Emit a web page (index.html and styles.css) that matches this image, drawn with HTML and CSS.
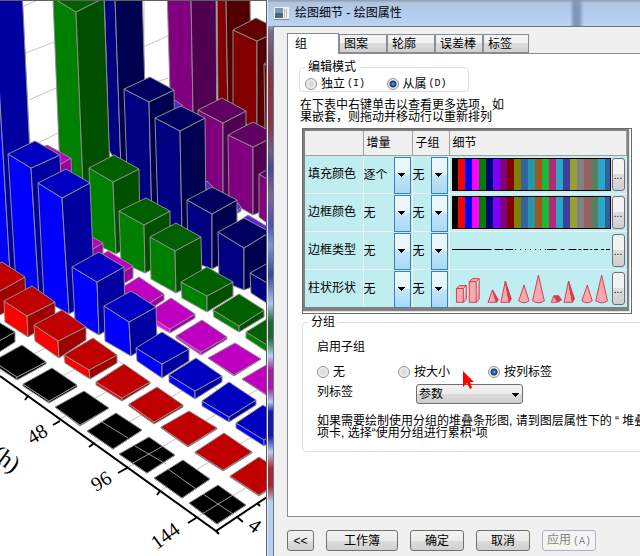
FILE: index.html
```html
<!DOCTYPE html>
<html lang="zh-CN">
<head>
<meta charset="utf-8">
<title>绘图细节 - 绘图属性</title>
<link rel="stylesheet" href="styles.css">
</head>
<body>
<main class="workspace">
  <section class="graph">
    <svg class="plot" viewBox="0 0 267 556" role="img" aria-label="3D 柱状图">
      <g class="gridlines">
        <path d="M22 0 30 145M24 6 38 0M26 53 54 42M29 100 56 88M32 146 60 132M143 47 168 36M145 86 168 78M144 0V90"/>
        <path d="M0 372 60 340M25 397 95 358M57 421 130 378M92 444 190 386M127 468 260 388M160 491 267 428M196 518 267 475M90 340 150 384M120 320 267 425"/>
      </g>
      <g id="bars" class="bars"></g>
      <path class="cross" d="M102 422 128 438M135 446 166 464M133 463 163 446M168 469 196 489M203 494 233 514M202 514 233 495"/>
      <path class="axis" d="M0 376 216 531 267 497M28 396 25 400M60 421 53 425M93 444 89 447M127 468 118 473M160 491 157 495M196 518 188 523M216 531 219 534M237 517 243 522M257 503 260 506"/>
      <g class="ticks">
        <text transform="translate(32 445) rotate(-31)">48</text>
        <text transform="translate(96 492) rotate(-31)">96</text>
        <text transform="translate(157 550) rotate(-36)">144</text>
        <text transform="translate(247 528) rotate(36)">4</text>
        <text class="unit" transform="translate(-10 457) rotate(36)">(h)</text>
      </g>
      <path class="rim" d="M0 .5H267M266.500 0V556"/>
    </svg>
  </section>

  <section class="dialog" aria-label="绘图细节">
    <header class="titlebar">
      <svg class="app-icon" viewBox="0 0 15 13" aria-hidden="true">
        <rect width="15" height="13" rx="1" fill="#f3f3f0"/><rect x="1" y="1" width="8" height="10" fill="#7d99b0"/><rect x="1" y="6" width="8" height="5" fill="#456a78"/><path d="M10.500 2V11M12.500 2V11" stroke="#bbb"/><path d="M0 12.500H15" stroke="#888"/>
      </svg>
      <h1>绘图细节 - 绘图属性</h1>
    </header>
    <div class="client">
      <nav class="tabs" role="tablist">
        <button class="tab active" role="tab" aria-selected="true">组</button>
        <button class="tab" role="tab">图案</button>
        <button class="tab" role="tab">轮廓</button>
        <button class="tab" role="tab">误差棒</button>
        <button class="tab" role="tab">标签</button>
      </nav>
      <div class="page" role="tabpanel">
        <fieldset class="box mode">
          <legend>编辑模式</legend>
          <label><input type="radio" name="mode">独立<span class="key">(I)</span></label>
          <label><input type="radio" name="mode" checked>从属<span class="key">(D)</span></label>
        </fieldset>
        <p class="note">在下表中右键单击以查看更多选项，如<br>果嵌套，则拖动并移动行以重新排列</p>
        <div class="table-frame">
          <table class="props">
            <colgroup><col class="c-name"><col class="c-inc"><col class="c-sub"><col></colgroup>
            <thead><tr><th></th><th>增量</th><th>子组</th><th>细节</th></tr></thead>
            <tbody>
              <tr>
                <th>填充颜色</th>
                <td><span class="combo"><select aria-label="填充颜色 增量"><option>逐个</option></select></span></td>
                <td><span class="combo"><select aria-label="填充颜色 子组"><option>无</option></select></span></td>
                <td><div class="detail"><span class="swatches"></span><button class="more" aria-label="填充颜色 细节">...</button></div></td>
              </tr>
              <tr>
                <th>边框颜色</th>
                <td><span class="combo"><select aria-label="边框颜色 增量"><option>无</option></select></span></td>
                <td><span class="combo"><select aria-label="边框颜色 子组"><option>无</option></select></span></td>
                <td><div class="detail"><span class="swatches"></span><button class="more" aria-label="边框颜色 细节">...</button></div></td>
              </tr>
              <tr>
                <th>边框类型</th>
                <td><span class="combo"><select aria-label="边框类型 增量"><option>无</option></select></span></td>
                <td><span class="combo"><select aria-label="边框类型 子组"><option>无</option></select></span></td>
                <td><div class="detail">
                  <svg class="sample" viewBox="0 0 161 33" aria-hidden="true"><path class="line" d="M0 15.500H40M43 15.500H52M54 15.500H62M64 15.500h1M69 15.500h1M74 15.500h1M79 15.500h1M84 15.500h1M89 15.500h1M94 15.500h1M96 15.500H106M110 15.500h4M118 15.500h8M128 15.500h3M133 15.500h5M140 15.500h2M144 15.500h4M151 15.500h3M156 15.500h4"/></svg>
                  <button class="more" aria-label="边框类型 细节">...</button></div></td>
              </tr>
              <tr>
                <th>柱状形状</th>
                <td><span class="combo"><select aria-label="柱状形状 增量"><option>无</option></select></span></td>
                <td><span class="combo"><select aria-label="柱状形状 子组"><option>无</option></select></span></td>
                <td><div class="detail">
                  <svg class="sample shapes" viewBox="0 0 161 33" aria-hidden="true">
                    <path d="M4.500 16.500H11.500V30.500H4.500ZM4.500 16.500 7.500 13.500H14.500L11.500 16.500M14.500 13.500V27.500L11.500 30.500"/>
                    <path d="M17.500 9.500H24.500V30.500H17.500ZM17.500 9.500 20.500 6.500H27.500L24.500 9.500M27.500 6.500V27.500L24.500 30.500"/>
                    <path d="M36.500 30.500 41 18 45 30.500Z"/><path class="shade" d="M41 18 47 28 45 30.500Z"/>
                    <path d="M49.500 30.500 54 9 58 30.500Z"/><path class="shade" d="M54 9 60 27 58 30.500Z"/>
                    <path d="M67.500 29 73 13 78 29Q73 33 67.500 29Z"/><path d="M81.500 29 87.500 3 93.500 29Q88 33 81.500 29Z"/>
                    <path d="M100.500 30.500 103 24H108L106 30.500Z"/><path class="shade" d="M103 24H108L111 28 107 30.500Z"/>
                    <path d="M113.500 30.500 118 9 122 30.500Z"/><path class="shade" d="M118 9 124 27 122 30.500Z"/>
                    <path d="M131.500 29 137 13 142 29Q137 33 131.500 29Z"/><path d="M145.500 29 151.500 3 157.500 29Q152 33 145.500 29Z"/>
                  </svg>
                  <button class="more" aria-label="柱状形状 细节">...</button></div></td>
              </tr>
            </tbody>
          </table>
        </div>
        <fieldset class="box grouping">
          <legend>分组</legend>
          <p class="caption">启用子组</p>
          <div class="choices">
            <label><input type="radio" name="sub">无</label>
            <label><input type="radio" name="sub">按大小</label>
            <label><input type="radio" name="sub" checked>按列标签</label>
          </div>
          <div class="field">
            <label for="col-label">列标签</label>
            <select id="col-label" class="dropdown"><option>参数</option></select>
          </div>
          <p class="hint">如果需要绘制使用分组的堆叠条形图, 请到图层属性下的 “ 堆叠<br>项卡, 选择“使用分组进行累积“项</p>
        </fieldset>
      </div>
      <footer class="actions">
        <button class="btn fold">&lt;&lt;</button>
        <button class="btn wide">工作簿</button>
        <button class="btn">确定</button>
        <button class="btn">取消</button>
        <button class="btn" disabled>应用<span class="key">(A)</span></button>
      </footer>
    </div>
    <svg class="pointer" viewBox="0 0 12 18" aria-hidden="true"><path d="M0 0V16L4 12 7 18 9 17 7 11H11Z" fill="#f00"/></svg>
  </section>
</main>
<script src="chart.js"></script>
</body>
</html>
```
FILE: styles.css
```css
* { box-sizing: border-box; }

body {
  margin: 0;
  overflow: hidden;
  background: #fff;
  color: #000;
  font: 12px/12px "Liberation Sans", "Noto Sans CJK SC", sans-serif;
}

button, select, input { font: inherit; color: inherit; margin: 0; }
h1, p { margin: 0; font-weight: normal; }

.workspace {
  display: grid;
  grid-template-columns: 267px minmax(0, 1fr);
  min-height: 100vh;
}

/* 3D bar graph */
.graph { overflow: hidden; }
.plot { display: block; width: 100%; }
.gridlines { fill: none; stroke: #c4c4c4; }
.bars path { stroke: #8c8c8c; stroke-width: 1; stroke-linejoin: round; }
.cross { fill: none; stroke: #999; }
.axis { fill: none; stroke: #000; stroke-width: 2; }
.ticks { font: 20px "Liberation Serif", serif; }
.unit { font-size: 24px; }
.rim { fill: none; stroke: #606060; }

/* Dialog window */
.dialog {
  position: relative;
  display: flex;
  flex-direction: column;
  overflow: hidden;
  padding-left: 5px;
  background: linear-gradient(#b4c4dc 20px, #806880 32px, #70485c 64px, #8c3440 80px, #88384c 125px, #706080 150px, #484890 168px, #806890 195px, #5050b0 225px, #8098c8 245px, #3c4890 275px, #b0c8e8 304px, #206830 322px, #206830 338px, #b8d0f0 356px, #a020a0 370px, #a020a0 388px, #b8d0f0 402px, #1818a8 412px, #1818a8 436px, #b8d0f0 452px, #a82830 468px, #a82830 486px, #b8d0f0 502px);
  border-left: 1px solid #dfe9f5;
}

.titlebar {
  display: flex;
  align-items: center;
  gap: 6px;
  height: 26px;
  margin-left: -5px;
  padding-left: 6px;
  background:
    linear-gradient(90deg, transparent 302px, #8496b8 306px, #8496b8 311px, transparent 316px),
    linear-gradient(#8c9cb0, #b2c6e0 3px, #b4cdf0 15px, #bcd2f0);
}
.titlebar h1 { font-size: 12px; line-height: 14px; }
.app-icon { width: 15px; height: 13px; }

.client {
  flex: 1;
  padding: 6px 0 4px 13px;
  background: #f0f0f0;
  border-top: 1px solid #6c7484;
  border-left: 1px solid #6c7484;
}

.tabs { display: flex; align-items: flex-end; height: 20px; }
.tab {
  height: 19px;
  width: 48px;
  padding: 0 0 0 4px;
  text-align: left;
  border: 1px solid #898c95;
  background: linear-gradient(#f2f2f2 45%, #dcdcdc 50%, #d0d0d0);
}
.tab:last-child { width: 46px; }
.tab.active {
  z-index: 1;
  width: 52px;
  height: 21px;
  padding-left: 7px;
  margin-bottom: -1px;
  background: #fff;
  border-bottom: 0;
}

.page {
  height: 464px;
  margin-right: -24px;
  padding: 7px 0 0 11px;
  background: #fff;
  border: 1px solid #898c95;
}

.box { margin: 0; border: 1px solid #d5dfe5; border-radius: 4px; min-width: 0; }
.box legend { padding: 0 3px; }
.mode {
  display: flex;
  width: 170px;
  height: 31px;
  padding: 4px 0 0 5px;
}
.mode label { width: 87px; }
label { white-space: nowrap; }
.mode label, .choices label { display: flex; align-items: center; gap: 4px; height: 13px; }
.key { font: 10px/12px "Liberation Mono", monospace; margin-left: -2px; }

input[type="radio"] {
  appearance: none;
  flex: none;
  width: 12px;
  height: 12px;
  border: 1px solid #8e8f8f;
  border-radius: 50%;
  background: radial-gradient(#ddd 35%, #f8f8f8 75%);
}
input[type="radio"]:checked {
  background: radial-gradient(circle at 50% 50%, #58b8e8 0, #1b5c9c 2px, #16305c 3px, #f0f0f0 4px);
}

.note { padding: 7px 0 5px 1px; }

.table-frame {
  width: 330px;
  margin-left: 3px;
  padding: 2px 4px 6px 2px;
  border: 1px solid #696969;
  background: #808080;
  box-shadow: inset -1px -1px #fff, inset -2px -2px #e3e3e3;
}
.props { width: 100%; table-layout: fixed; border-collapse: collapse; background: #c0eef0; }
.c-name { width: 58px; }
.c-inc { width: 49px; }
.c-sub { width: 37px; }
.props th { font-weight: normal; text-align: left; padding: 0 3px; white-space: nowrap; }
.props td { padding: 0; border-left: 1px solid #f0f0f0; }
.props tbody tr { height: 38px; border-bottom: 1px solid #f0f0f0; }
.props tbody tr:last-child { border-bottom: 0; }
.props thead tr { height: 24px; }
.props thead th { background: #f0f0f0; border-right: 1px solid #a0a0a0; border-bottom: 1px solid #a0a0a0; }

.combo { display: grid; align-items: center; height: 35px; }
.combo select {
  grid-area: 1 / 1;
  appearance: none;
  width: 100%;
  height: 35px;
  padding: 0;
  border: 0;
  border-radius: 0;
  background: none;
}
.combo::after {
  content: "";
  grid-area: 1 / 1;
  justify-self: end;
  width: 15px;
  height: 35px;
  margin-right: 1px;
  border: 1px solid #3c7fb1;
  pointer-events: none;
  background:
    linear-gradient(#000, #000) 3px 15px / 7px 1px no-repeat,
    linear-gradient(#000, #000) 4px 16px / 5px 1px no-repeat,
    linear-gradient(#000, #000) 5px 17px / 3px 1px no-repeat,
    linear-gradient(#000, #000) 6px 18px / 1px 1px no-repeat,
    linear-gradient(#eaf6fd 50%, #c4e5f8 50%, #a7d9f5);
}

.detail { display: flex; gap: 1px; align-items: center; padding: 0 2px; }
.swatches {
  flex: 1;
  height: 33px;
  border: 1px solid #000;
  background: linear-gradient(90deg,
    #000 5px, #f00 5px 12px, #00f 12px 19px, #f0f 19px 26px, #008000 26px 33px,
    #000080 33px 40px, #8000ff 40px 47px, #800080 47px 54px, #800000 54px 61px,
    #808000 61px 68px, #3366a0 68px 75px, #2498a8 75px 82px, #a05820 82px 89px,
    #18b838 89px 96px, #b82878 96px 103px, #28a8c8 103px 110px, #404098 110px 117px,
    #98a030 117px 124px, #808080 124px 131px, #986060 131px 138px, #588060 138px 145px,
    #28a8c8 145px 152px, #3060a0 152px);
}
.sample { flex: 1; min-width: 0; height: 33px; }
.line { fill: none; stroke: #000; }
.shapes path { fill: #f8a8b0; stroke: #d83c4c; }
.shapes .shade { fill: #d83c4c; }
.more {
  flex: none;
  width: 13px;
  height: 33px;
  padding: 3px 0 0;
  border: 1px solid #707070;
  border-radius: 3px;
  background: linear-gradient(#f2f2f2 50%, #ddd 50%, #cfcfcf);
  font-size: 10px;
}

.grouping {
  height: 136px;
  margin: 2px 0 0 3px;
  padding: 13px 0 0 14px;
}
.grouping legend { margin-left: -9px; }
.choices { display: grid; grid-template-columns: 81px 90px 1fr; margin: 12px 0 6px; }
.field { display: grid; grid-template-columns: 99px 107px; height: 20px; }
.field label { padding-top: 2px; }
.dropdown {
  appearance: none;
  height: 20px;
  padding: 0 2px;
  border: 1px solid #707070;
  border-radius: 3px;
  background:
    linear-gradient(#000, #000) 95px 8px / 7px 1px no-repeat,
    linear-gradient(#000, #000) 96px 9px / 5px 1px no-repeat,
    linear-gradient(#000, #000) 97px 10px / 3px 1px no-repeat,
    linear-gradient(#000, #000) 98px 11px / 1px 1px no-repeat,
    linear-gradient(#f2f2f2, #ebebeb 50%, #dadada 50%, #cfcfcf);
}
.hint { padding-top: 11px; white-space: nowrap; }

.actions { display: flex; gap: 12px; padding-top: 13px; }
.btn {
  width: 54px;
  height: 21px;
  padding: 0;
  border: 1px solid #707070;
  border-radius: 3px;
  background: linear-gradient(#f2f2f2, #ebebeb 50%, #ddd 50%, #cfcfcf);
}
.fold { width: 27px; }
.wide { width: 72px; }
.btn:disabled { color: #838383; border-color: #adb2c8; background: #f4f4f4; }
.btn .key { margin-left: 2px; }

/* Mouse pointer over the dialog */
.pointer { position: absolute; left: 195px; top: 371px; width: 12px; height: 18px; }
```
FILE: chart.js
```js
// Shades per series: [top, left face, right face]
const shades = {
  maroon: ["#600000", "#800000", "#500000"],
  purple: ["#600060", "#800080", "#500050"],
  violet: ["#5a28c8", "#5a28c8", "#5040c8"],
  navy: ["#000060", "#000080", "#000050"],
  green: ["#006000", "#008000", "#005000"],
  magenta: ["#c000c0", "#ff00ff", "#a000a0"],
  blue: ["#0000c0", "#0000ff", "#0000a0"],
  red: ["#c00000", "#ff0000", "#a00000"],
  black: ["#000", "#000", "#000"]
};

// Top corners (left, back, right, front), then the feet (left, front, right)
const bars = {
  maroon: [
    [217,-12, 234,-20, 250,-12, 226,-2, 218,110, 228,120, 251,110],
    [233,30, 256,18, 280,30, 257,41, 233,110, 257,135, 280,120],
    [264,64, 272,58, 290,64, 280,72, 266,200, 280,200, 290,200]
  ],
  purple: [
    [167,-12, 192,-20, 216,-12, 191,-2, 172,160, 194,170, 217,160],
    [198,110, 222,98, 246,111, 223,123, 201,190, 223,200, 246,205],
    [228,135, 253,122, 277,135, 253,147, 229,201, 253,215, 277,205],
    [259,174, 284,161, 300,174, 284,190, 259,217, 284,236, 300,220]
  ],
  violet: [
    [160,112, 175,100, 182,105, 174,114, 160,118, 174,120, 182,110],
    [200,188, 207,181, 213,187, 207,190, 200,190, 207,194, 213,190],
    [232,208, 238,203, 241,207, 238,210, 232,210, 238,213, 241,211],
    [242,219, 248,215, 273,230, 268,233, 242,221, 268,236, 273,233]
  ],
  navy: [
    [104,-12, 128,-20, 142,-12, 115,-2, 109,150, 121,170, 147,160],
    [124,89, 150,77, 174,90, 149,102, 128,200, 152,225, 176,210],
    [155,118, 181,106, 205,118, 180,131, 158,215, 182,235, 206,220],
    [187,200, 212,187, 237,200, 212,214, 188,260, 212,269, 237,256],
    [218,232, 244,218, 270,232, 244,248, 219,280, 244,290, 270,280],
    [250,273, 275,259, 300,273, 276,288, 251,293, 276,309, 300,295]
  ],
  green: [
    [53,-2, 78,-20, 104,-2, 76,12, 61,195, 84,210, 111,200],
    [89,168, 114,155, 139,169, 113,182, 92,242, 116,254, 140,240],
    [119,211, 146,198, 170,211, 144,225, 121,262, 145,273, 170,260],
    [150,237, 176,223, 201,237, 175,251, 151,279, 176,293, 202,280],
    [181,282, 207,267, 233,282, 207,296, 182,298, 207,312, 233,296],
    [213,310, 239,294, 264,310, 239,326, 214,317, 239,332, 264,317],
    [246,332, 272,316, 290,332, 272,348, 246,338, 272,355, 290,338]
  ],
  magenta: [
    [22,158, 47,145, 71,158, 46,173, 22,190, 46,205, 72,190],
    [53,244, 78,229, 103,243, 78,258, 53,255, 78,270, 103,255],
    [82,266, 108,251, 133,266, 108,281, 82,278, 108,293, 133,278],
    [113,293, 139,277, 164,294, 138,310, 113,300, 138,317, 164,300],
    [146,314, 171,298, 195,314, 170,329, 146,319, 170,333, 195,318],
    [176,336, 202,320, 227,337, 201,352, 176,338, 201,355, 227,339],
    [208,358, 235,343, 261,359, 234,375, 208,358, 234,376, 261,359],
    [242,379, 268,364, 290,380, 269,396, 242,379, 269,397, 290,381]
  ],
  blue: [
    [-25,-12, 0,-20, 22,-12, -6,-2, -12,280, 11,290, 36,280],
    [8,154, 35,141, 60,155, 31,168, 16,284, 39,297, 65,285],
    [38,183, 66,169, 90,183, 62,198, 44,300, 69,314, 95,300],
    [72,267, 99,252, 124,267, 97,282, 75,321, 99,335, 125,319],
    [104,306, 131,291, 156,307, 129,322, 105,341, 131,356, 157,340],
    [136,348, 162,332, 189,349, 162,364, 137,361, 162,378, 189,361],
    [169,375, 196,358, 222,376, 195,391, 169,382, 195,399, 222,382],
    [202,401, 229,382, 256,400, 229,417, 202,406, 229,422, 256,405],
    [236,423, 263,405, 290,423, 264,440, 236,428, 264,446, 290,427]
  ],
  red: [
    [-28,277, 2,262, 25,277, -2,292, -28,300, -2,316, 26,301],
    [4,301, 32,286, 55,302, 27,316, 5,322, 28,337, 55,320],
    [34,325, 62,310, 86,327, 58,341, 35,341, 59,358, 86,340],
    [64,355, 93,338, 117,355, 89,370, 65,363, 90,379, 117,363],
    [96,382, 124,364, 150,382, 122,398, 96,385, 122,401, 150,384],
    [129,404, 157,387, 183,405, 154,422, 129,406, 154,424, 183,407],
    [161,427, 189,411, 217,428, 188,446, 161,428, 188,447, 217,429],
    [195,452, 224,433, 252,452, 223,470, 195,453, 223,471, 252,453],
    [230,476, 259,457, 288,476, 259,495, 230,477, 259,496, 288,477]
  ],
  black: [
    [-34,340, -8,318, 15,332, -10,346, -34,350, -10,358, 15,342],
    [-7,361, 22,345, 46,362, 17,377, -7,364, 17,380, 46,364],
    [23,384, 52,368, 77,385, 49,401, 23,386, 49,403, 77,387],
    [55,407, 84,391, 109,408, 80,425, 55,407, 80,426, 109,408],
    [87,431, 116,413, 142,430, 113,449, 87,431, 113,449, 142,430],
    [119,454, 149,437, 175,455, 147,473, 119,454, 147,473, 175,455],
    [154,478, 183,460, 210,479, 182,498, 154,478, 182,498, 210,479],
    [189,503, 218,485, 246,505, 217,524, 189,503, 217,524, 246,505]
  ]
};

const layer = document.getElementById("bars");

function face(points, fill) {
  const path = document.createElementNS("http://www.w3.org/2000/svg", "path");
  path.setAttribute("d", "M" + points.map(p => p.join(" ")).join("L") + "Z");
  path.setAttribute("fill", fill);
  layer.append(path);
}

for (const [series, list] of Object.entries(bars)) {
  const [top, left, right] = shades[series];
  for (const v of list) {
    const [l, b, r, f, lf, ff, rf] = [0, 2, 4, 6, 8, 10, 12].map(i => [v[i], v[i + 1]]);
    face([l, f, ff, lf], left);
    face([f, r, rf, ff], right);
    face([l, b, r, f], top);
  }
}
```
